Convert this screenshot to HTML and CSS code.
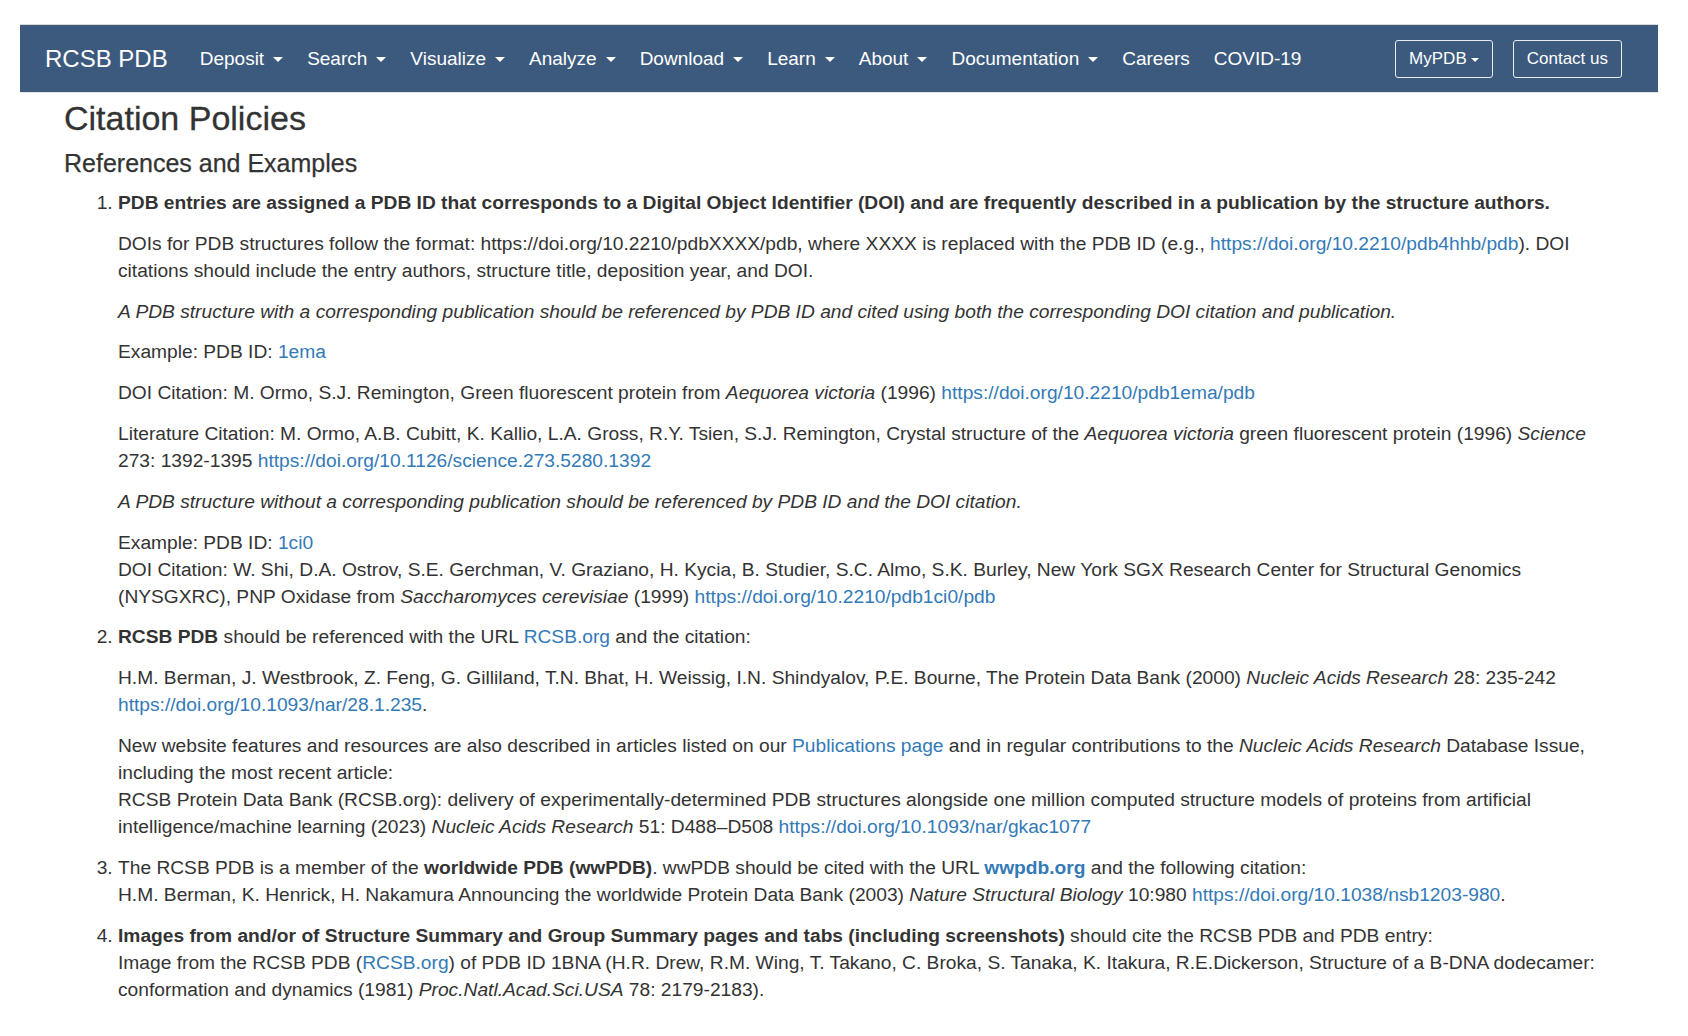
FILE: index.html
```html
<!DOCTYPE html>
<html lang="en">
<head>
<meta charset="utf-8">
<title>Citation Policies - RCSB PDB</title>
<link rel="stylesheet" href="styles.css">
</head>
<body>
<header class="navbar">
  <a class="brand" href="#">RCSB PDB</a>
  <nav class="menu">
    <a class="menu-item" href="#">Deposit<span class="caret"></span></a>
    <a class="menu-item" href="#">Search<span class="caret"></span></a>
    <a class="menu-item" href="#">Visualize<span class="caret"></span></a>
    <a class="menu-item" href="#">Analyze<span class="caret"></span></a>
    <a class="menu-item" href="#">Download<span class="caret"></span></a>
    <a class="menu-item" href="#">Learn<span class="caret"></span></a>
    <a class="menu-item" href="#">About<span class="caret"></span></a>
    <a class="menu-item" href="#">Documentation<span class="caret"></span></a>
    <a class="menu-item" href="#">Careers</a>
    <a class="menu-item" href="#">COVID-19</a>
  </nav>
  <div class="actions">
    <a class="nav-btn" href="#">MyPDB<span class="caret caret-sm"></span></a>
    <a class="nav-btn" href="#">Contact us</a>
  </div>
</header>

<main class="content">
  <h1 class="page-title">Citation Policies</h1>
  <h2 class="section-title">References and Examples</h2>
  <ol class="refs">
    <li>
      <p><strong>PDB entries are assigned a PDB ID that corresponds to a Digital Object Identifier (DOI) and are frequently described in a publication by the structure authors.</strong></p>
      <p>DOIs for PDB structures follow the format: https://doi.org/10.2210/pdbXXXX/pdb, where XXXX is replaced with the PDB ID (e.g., <a href="#">https://doi.org/10.2210/pdb4hhb/pdb</a>). DOI citations should include the entry authors, structure title, deposition year, and DOI.</p>
      <p><em>A PDB structure with a corresponding publication should be referenced by PDB ID and cited using both the corresponding DOI citation and publication.</em></p>
      <p>Example: PDB ID: <a href="#">1ema</a></p>
      <p>DOI Citation: M. Ormo, S.J. Remington, Green fluorescent protein from <em>Aequorea victoria</em> (1996) <a href="#">https://doi.org/10.2210/pdb1ema/pdb</a></p>
      <p>Literature Citation: M. Ormo, A.B. Cubitt, K. Kallio, L.A. Gross, R.Y. Tsien, S.J. Remington, Crystal structure of the <em>Aequorea victoria</em> green fluorescent protein (1996) <em>Science</em> 273: 1392-1395 <a href="#">https://doi.org/10.1126/science.273.5280.1392</a></p>
      <p><em>A PDB structure without a corresponding publication should be referenced by PDB ID and the DOI citation.</em></p>
      <p>Example: PDB ID: <a href="#">1ci0</a><br>DOI Citation: W. Shi, D.A. Ostrov, S.E. Gerchman, V. Graziano, H. Kycia, B. Studier, S.C. Almo, S.K. Burley, New York SGX Research Center for Structural Genomics (NYSGXRC), PNP Oxidase from <em>Saccharomyces cerevisiae</em> (1999) <a href="#">https://doi.org/10.2210/pdb1ci0/pdb</a></p>
    </li>
    <li>
      <p><strong>RCSB PDB</strong> should be referenced with the URL <a href="#">RCSB.org</a> and the citation:</p>
      <p>H.M. Berman, J. Westbrook, Z. Feng, G. Gilliland, T.N. Bhat, H. Weissig, I.N. Shindyalov, P.E. Bourne, The Protein Data Bank (2000) <em>Nucleic Acids Research</em> 28: 235-242 <a href="#">https://doi.org/10.1093/nar/28.1.235</a>.</p>
      <p>New website features and resources are also described in articles listed on our <a href="#">Publications page</a> and in regular contributions to the <em>Nucleic Acids Research</em> Database Issue, including the most recent article:<br>RCSB Protein Data Bank (RCSB.org): delivery of experimentally-determined PDB structures alongside one million computed structure models of proteins from artificial intelligence/machine learning (2023) <em>Nucleic Acids Research</em> 51: D488&ndash;D508 <a href="#">https://doi.org/10.1093/nar/gkac1077</a></p>
    </li>
    <li>
      <p>The RCSB PDB is a member of the <strong>worldwide PDB (wwPDB)</strong>. wwPDB should be cited with the URL <a class="strong-link" href="#">wwpdb.org</a> and the following citation:<br>H.M. Berman, K. Henrick, H. Nakamura Announcing the worldwide Protein Data Bank (2003) <em>Nature Structural Biology</em> 10:980 <a href="#">https://doi.org/10.1038/nsb1203-980</a>.</p>
    </li>
    <li>
      <p><strong>Images from and/or of Structure Summary and Group Summary pages and tabs (including screenshots)</strong> should cite the RCSB PDB and PDB entry:<br>Image from the RCSB PDB (<a href="#">RCSB.org</a>) of PDB ID 1BNA (H.R. Drew, R.M. Wing, T. Takano, C. Broka, S. Tanaka, K. Itakura, R.E.Dickerson, Structure of a B-DNA dodecamer: conformation and dynamics (1981) <em>Proc.Natl.Acad.Sci.USA</em> 78: 2179-2183).</p>
    </li>
  </ol>
</main>
</body>
</html>
```
FILE: styles.css
```css
* { box-sizing: border-box; }

html, body {
  margin: 0;
  padding: 0;
  background: #fff;
}

body {
  font-family: "Liberation Sans", Arial, sans-serif;
  font-size: 19.2px;
  line-height: 27px;
  color: #333;
}

a { color: #337ab7; text-decoration: none; }

/* ---------- navbar ---------- */
.navbar {
  display: flex;
  align-items: center;
  margin: 24px 30px 0 20px;
  height: 69px;
  padding: 0 36px 0 25px;
  background: #3c5a7e;
  border-top: 1px solid #d9d9d9;
  border-bottom: 1px solid #e6e6e6;
}

.brand {
  color: #fff;
  font-size: 24px;
  line-height: 30px;
  margin-right: 20px;
}

.menu {
  display: flex;
  align-items: center;
  flex: 1;
}

.menu-item {
  color: #fff;
  font-size: 19px;
  line-height: 24px;
  padding: 0 12px;
  display: flex;
  align-items: center;
}

.caret {
  display: inline-block;
  width: 0;
  height: 0;
  margin-left: 9px;
  margin-top: 2px;
  border-top: 5px solid #fff;
  border-left: 5px solid transparent;
  border-right: 5px solid transparent;
}

.caret-sm {
  margin-left: 4px;
  border-top-width: 4px;
  border-left-width: 4px;
  border-right-width: 4px;
}

.actions {
  display: flex;
  gap: 20px;
}

.nav-btn {
  display: flex;
  align-items: center;
  justify-content: center;
  height: 38px;
  padding: 0 13px;
  color: #fff;
  font-size: 17px;
  border: 1px solid #e8edf3;
  border-radius: 3px;
}

/* ---------- content ---------- */
.content {
  padding: 0 88px 40px 64px;
}

.page-title {
  font-size: 34px;
  font-weight: normal;
  line-height: 38px;
  margin: 6px 0 0;
  color: #333;
  -webkit-text-stroke: 0.3px #333;
}

.section-title {
  font-size: 25px;
  font-weight: normal;
  line-height: 28px;
  margin: 12px 0 0;
  color: #333;
  -webkit-text-stroke: 0.25px #333;
}

.refs {
  margin: 12px 0 0;
  padding-left: 54px;
}

.refs p {
  margin: 0 0 13.8px;
}

.strong-link { font-weight: bold; }
```
